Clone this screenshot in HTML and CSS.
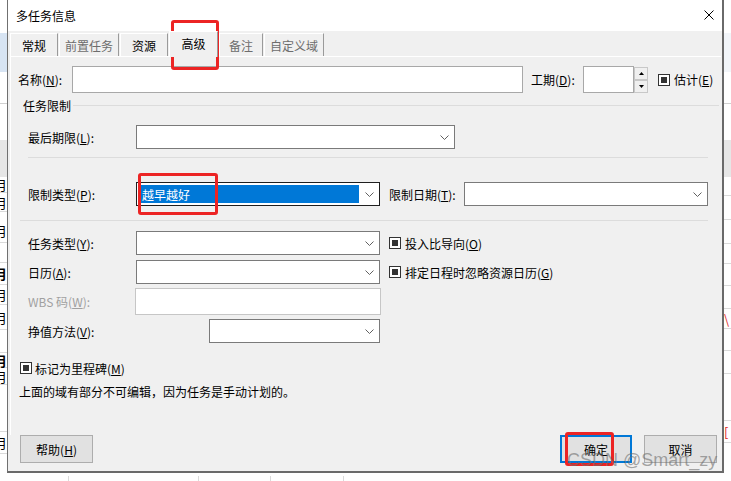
FILE: index.html
```html
<!DOCTYPE html>
<html lang="zh-CN">
<head>
    <meta charset="UTF-8">
    <title>多任务信息</title>
    <link rel="stylesheet" href="styles.css">
</head>
<body>
<div class="desk">

    <!-- sheet behind the dialog, left edge -->
    <div class="strip">
        <div class="c33"></div>
        <div class="c39 blue"></div>
        <div class="c32 line"></div>
        <div class="c36"></div>
        <div class="c37 grey"></div>
        <div class="cell c16">月</div>
        <div class="cell c19">月</div>
        <div class="cell c31 low">月</div>
        <div class="cell c20"></div>
        <div class="cell c22 bold">月</div>
        <div class="cell c20">月</div>
        <div class="cell c25">月</div>
        <div class="cell c23"></div>
        <div class="cell c15 bold">月</div>
        <div class="cell c17">月</div>
        <div class="cell c47"></div>
        <div class="cell c22">月</div>
    </div>

    <div class="center">
        <div class="dialog">
            <div class="titlebar">
                <span>多任务信息</span>
                <svg class="close" width="10" height="10" viewBox="0 0 10 10"><path d="M0.5 0.5L9.5 9.5M9.5 0.5L0.5 9.5" stroke="#000" stroke-width="1"/></svg>
            </div>

            <div class="tabs">
                <div class="tab">常规</div>
                <div class="tab dim">前置任务</div>
                <div class="tab">资源</div>
                <div class="tab active">高级</div>
                <div class="tab dim narrow">备注</div>
                <div class="tab dim">自定义域</div>
            </div>

            <div class="page">
                <div class="row row-name">
                    <span class="lbl-name">名称(<u>N</u>):</span>
                    <div class="input input-name"></div>
                    <span class="lbl-dur">工期(<u>D</u>):</span>
                    <div class="input input-dur"></div>
                    <div class="spin">
                        <div class="spin-btn"><svg width="5" height="3"><path d="M2.5 0L5 3H0z" fill="#000"/></svg></div>
                        <div class="spin-btn"><svg width="5" height="3"><path d="M0 0H5L2.5 3z" fill="#000"/></svg></div>
                    </div>
                    <span class="check est"></span>
                    <span class="check-text">估计(<u>E</u>)</span>
                </div>

                <div class="group">
                    <span>任务限制</span>
                    <i class="group-rule"></i>
                </div>

                <div class="row row-lim r-deadline">
                    <span class="lbl">最后期限(<u>L</u>):</span>
                    <div class="combo w-long"><svg class="chev" width="9" height="5"><path d="M0.5 0.5L4.5 4.5L8.5 0.5" fill="none" stroke="#606060"/></svg></div>
                </div>

                <div class="sep sep-a"></div>

                <div class="row row-lim r-type">
                    <span class="lbl">限制类型(<u>P</u>):</span>
                    <div class="combo w-mid focus">
                        <span class="picked">越早越好</span>
                        <svg class="chev" width="9" height="5"><path d="M0.5 0.5L4.5 4.5L8.5 0.5" fill="none" stroke="#606060"/></svg>
                    </div>
                    <span class="lbl-date">限制日期(<u>T</u>):</span>
                    <div class="combo w-mid"><svg class="chev" width="9" height="5"><path d="M0.5 0.5L4.5 4.5L8.5 0.5" fill="none" stroke="#606060"/></svg></div>
                </div>

                <div class="sep sep-b"></div>

                <div class="row row-lim r-task">
                    <span class="lbl">任务类型(<u>Y</u>):</span>
                    <div class="combo w-mid"><svg class="chev" width="9" height="5"><path d="M0.5 0.5L4.5 4.5L8.5 0.5" fill="none" stroke="#606060"/></svg></div>
                    <span class="check side"></span>
                    <span class="check-text">投入比导向(<u>O</u>)</span>
                </div>

                <div class="row row-lim r-cal">
                    <span class="lbl">日历(<u>A</u>):</span>
                    <div class="combo w-mid"><svg class="chev" width="9" height="5"><path d="M0.5 0.5L4.5 4.5L8.5 0.5" fill="none" stroke="#606060"/></svg></div>
                    <span class="check side"></span>
                    <span class="check-text">排定日程时忽略资源日历(<u>G</u>)</span>
                </div>

                <div class="row row-lim r-wbs">
                    <span class="lbl off">WBS 码(<u>W</u>):</span>
                    <div class="input input-wbs"></div>
                </div>

                <div class="row row-lim r-ev">
                    <span class="lbl">挣值方法(<u>V</u>):</span>
                    <div class="combo w-short"><svg class="chev" width="9" height="5"><path d="M0.5 0.5L4.5 4.5L8.5 0.5" fill="none" stroke="#606060"/></svg></div>
                </div>

                <div class="row r-mile">
                    <span class="check"></span>
                    <span class="check-text">标记为里程碑(<u>M</u>)</span>
                </div>

                <div class="row r-note">上面的域有部分不可编辑，因为任务是手动计划的。</div>
            </div>

            <div class="footer">
                <div class="btn">帮助(<u>H</u>)</div>
                <div class="spacer"></div>
                <div class="btn ok">确定</div>
                <div class="btn cancel">取消</div>
            </div>
        </div>
        <div class="below">
            <i class="bl b1"></i><i class="bl b2"></i><i class="bl b3"></i><i class="bl b4"></i>
        </div>
    </div>

    <!-- sheet behind the dialog, right edge -->
    <div class="strip">
        <div class="c33"></div>
        <div class="c39 pale"></div>
        <div class="c32 line"></div>
        <div class="c36"></div>
        <div class="c37 grey"></div>
        <div class="cell c19"></div>
        <div class="cell c24"></div>
        <div class="cell c24"></div>
        <div class="cell c20"></div>
        <div class="cell c22"></div>
        <div class="cell c23"></div>
        <div class="cell c20 red-tick">\</div>
        <div class="cell c22"></div>
        <div class="cell c23"></div>
        <div class="cell c47"></div>
        <div class="cell c22 red-mark">[</div>
    </div>

    <div class="mark mark-tab"></div>
    <div class="mark mark-type"></div>
    <div class="mark mark-ok"></div>
    <div class="watermark">CSDN @Smart_zy</div>
</div>
</body>
</html>
```

FILE: styles.css
```css
* {
    box-sizing: border-box;
}
body {
    margin: 0;
    font-family: "Noto Sans CJK SC", "Noto Sans", sans-serif;
    font-size: 12px;
    color: #000;
    background: #fff;
}
u {
    text-decoration: underline;
    text-underline-offset: 1px;
}
.desk {
    position: relative;
    display: flex;
    width: 731px;
    height: 481px;
    overflow: hidden;
}

/* background sheet */
.strip {
    width: 7px;
    flex-shrink: 0;
    display: flex;
    flex-direction: column;
    overflow: hidden;
}
.strip div {
    flex-shrink: 0;
}
.blue { background: #d7e4f3; }
.pale { background: #f2f5f9; }
.grey { background: #e6e6e6; }
.line { border-bottom: 1px solid #d0d0d0; }
.cell {
    border-bottom: 1px solid #dadada;
    font-size: 13px;
    line-height: 1;
    display: flex;
    align-items: center;
    justify-content: flex-end;
    white-space: nowrap;
}
.cell.low { align-items: flex-end; padding-bottom: 5px; }
.cell.bold { font-weight: bold; }
.red-tick { color: #e03030; justify-content: flex-start; }
.red-mark { color: #e02020; justify-content: flex-start; }
.c15 { height: 15px; }
.c16 { height: 16px; }
.c17 { height: 17px; }
.c19 { height: 19px; }
.c20 { height: 20px; }
.c22 { height: 22px; }
.c23 { height: 23px; }
.c24 { height: 24px; }
.c25 { height: 25px; }
.c31 { height: 31px; }
.c32 { height: 32px; }
.c33 { height: 33px; }
.c36 { height: 36px; }
.c37 { height: 37px; }
.c39 { height: 39px; }
.c47 { height: 47px; }

.center {
    width: 717px;
    flex-shrink: 0;
    display: flex;
    flex-direction: column;
}
.below {
    flex: 1;
    display: flex;
    border-top: 3px solid #fff;
}
.below .bl {
    width: 1px;
    height: 100%;
    background: #dadada;
}
.b1 { margin-left: 61px; }
.b2 { margin-left: 129px; }
.b3 { margin-left: 71px; }
.b4 { margin-left: 72px; }

/* dialog */
.dialog {
    height: 473px;
    flex-shrink: 0;
    display: flex;
    flex-direction: column;
    background: #f0f0f0;
    border-left: 1px solid #707070;
    border-right: 2px solid #6a6a6a;
    border-bottom: 2px solid #6a6a6a;
}
.titlebar {
    height: 31px;
    flex-shrink: 0;
    background: #fff;
    display: flex;
    align-items: center;
    justify-content: space-between;
    padding: 0 8px 0 8px;
}
.close {
    margin-top: -1px;
}
.tabs {
    height: 25px;
    flex-shrink: 0;
    display: flex;
    align-items: flex-end;
    padding-left: 2px;
}
.tab {
    height: 23px;
    min-width: 48px;
    padding: 0 5px;
    display: flex;
    align-items: center;
    justify-content: center;
    border-top: 1px solid #fff;
    border-left: 1px solid #fff;
    border-right: 1px solid #9a9a9a;
    margin-right: 1px;
    white-space: nowrap;
}
.tab.dim { color: #6d6d6d; }
.tab.narrow { min-width: 44px; }
.tab.active {
    position: relative;
    z-index: 1;
    height: 26px;
    min-width: 49px;
    margin-bottom: -1px;
    padding-bottom: 2px;
    background: #f0f0f0;
}
.page {
    flex: 1;
    margin: 0 1px 0 2px;
    border-top: 1px solid #fff;
    border-left: 1px solid #fff;
    display: flex;
    flex-direction: column;
}
.row {
    display: flex;
    align-items: center;
    flex-shrink: 0;
    white-space: nowrap;
}
.row-name {
    margin-top: 9px;
    height: 27px;
    padding-left: 7px;
}
.lbl-name { width: 54px; }
.lbl-dur { width: 52px; margin-left: 8px; }
.input {
    height: 27px;
    background: #fff;
    border: 1px solid #a8a8a8;
}
.input-name { width: 451px; }
.input-dur { width: 51px; }
.input-wbs {
    width: 246px;
    margin-left: -1px;
    border-color: #c6c6c6;
}
.spin {
    width: 14px;
    height: 26px;
    display: flex;
    flex-direction: column;
}
.spin-btn {
    flex: 1;
    display: flex;
    align-items: center;
    justify-content: center;
    border: 1px solid #c8c8c8;
    background: #f0f0f0;
}
.check {
    width: 12px;
    height: 12px;
    flex-shrink: 0;
    border: 1px solid #333;
    background: #fff;
    display: flex;
    align-items: center;
    justify-content: center;
}
.check::after {
    content: "";
    width: 6px;
    height: 6px;
    background: #333;
}
.check.est { margin-left: 10px; }
.check.side { margin-left: 9px; }
.check-text { margin-left: 4px; }

.group {
    margin-top: 4px;
    height: 16px;
    padding-left: 12px;
    display: flex;
    align-items: center;
    flex-shrink: 0;
}
.group-rule {
    flex: 1;
    height: 1px;
    margin: 1px 2px 0 2px;
    background: #dcdcdc;
}
.row-lim {
    height: 24px;
    padding-left: 17px;
}
.lbl { width: 108px; }
.lbl.off { color: #a0a0a0; }
.lbl-date { width: 75px; margin-left: 9px; }
.combo {
    height: 24px;
    display: flex;
    align-items: center;
    justify-content: flex-end;
    background: #fff;
    border: 1px solid #7a7a7a;
}
.combo.focus { border-color: #1f1f1f; }
.chev { margin-right: 5px; }
.w-long { width: 319px; }
.w-mid { width: 244px; }
.w-short { width: 171px; margin-left: 73px; }
.picked {
    flex: 1;
    height: 18px;
    margin: 0 6px 0 4px;
    padding-left: 1px;
    display: flex;
    align-items: center;
    background: #0078d7;
    color: #fff;
}
.sep {
    height: 1px;
    flex-shrink: 0;
    background: #dcdcdc;
}
.sep-a { margin: 8px 0 0 17px; width: 680px; }
.sep-b { margin: 14px 0 0 9px; width: 688px; }
.r-deadline { margin-top: 12px; }
.r-type { margin-top: 24px; }
.r-task { margin-top: 10px; }
.r-cal { margin-top: 5px; }
.r-wbs { margin-top: 4px; height: 27px; }
.r-ev { margin-top: 4px; }
.r-mile {
    margin-top: 17px;
    height: 16px;
    padding-left: 9px;
}
.r-mile .check-text { margin-left: 3px; }
.r-note {
    margin-top: 7px;
    height: 16px;
    padding-left: 8px;
}

.footer {
    height: 36px;
    flex-shrink: 0;
    display: flex;
    align-items: flex-start;
    padding: 0 5px 0 12px;
}
.spacer { flex: 1; }
.btn {
    width: 73px;
    height: 28px;
    display: flex;
    align-items: center;
    justify-content: center;
    background: #e1e1e1;
    border: 1px solid #adadad;
}
.btn.ok {
    width: 72px;
    border: 2px solid #0078d7;
}
.btn.cancel { margin-left: 12px; }

/* annotations over the screenshot */
.mark {
    position: absolute;
    border: 3px solid #ec2424;
    border-radius: 3px;
}
.mark-tab { left: 171px; top: 20px; width: 48px; height: 50px; }
.mark-type { left: 138px; top: 173px; width: 80px; height: 42px; }
.mark-ok { left: 565px; top: 432px; width: 49px; height: 34px; }
.watermark {
    position: absolute;
    left: 567px;
    top: 449px;
    font-family: "Liberation Sans", Arial, sans-serif;
    font-size: 18px;
    line-height: 22px;
    color: rgba(110, 110, 110, 0.6);
    white-space: nowrap;
}
```
